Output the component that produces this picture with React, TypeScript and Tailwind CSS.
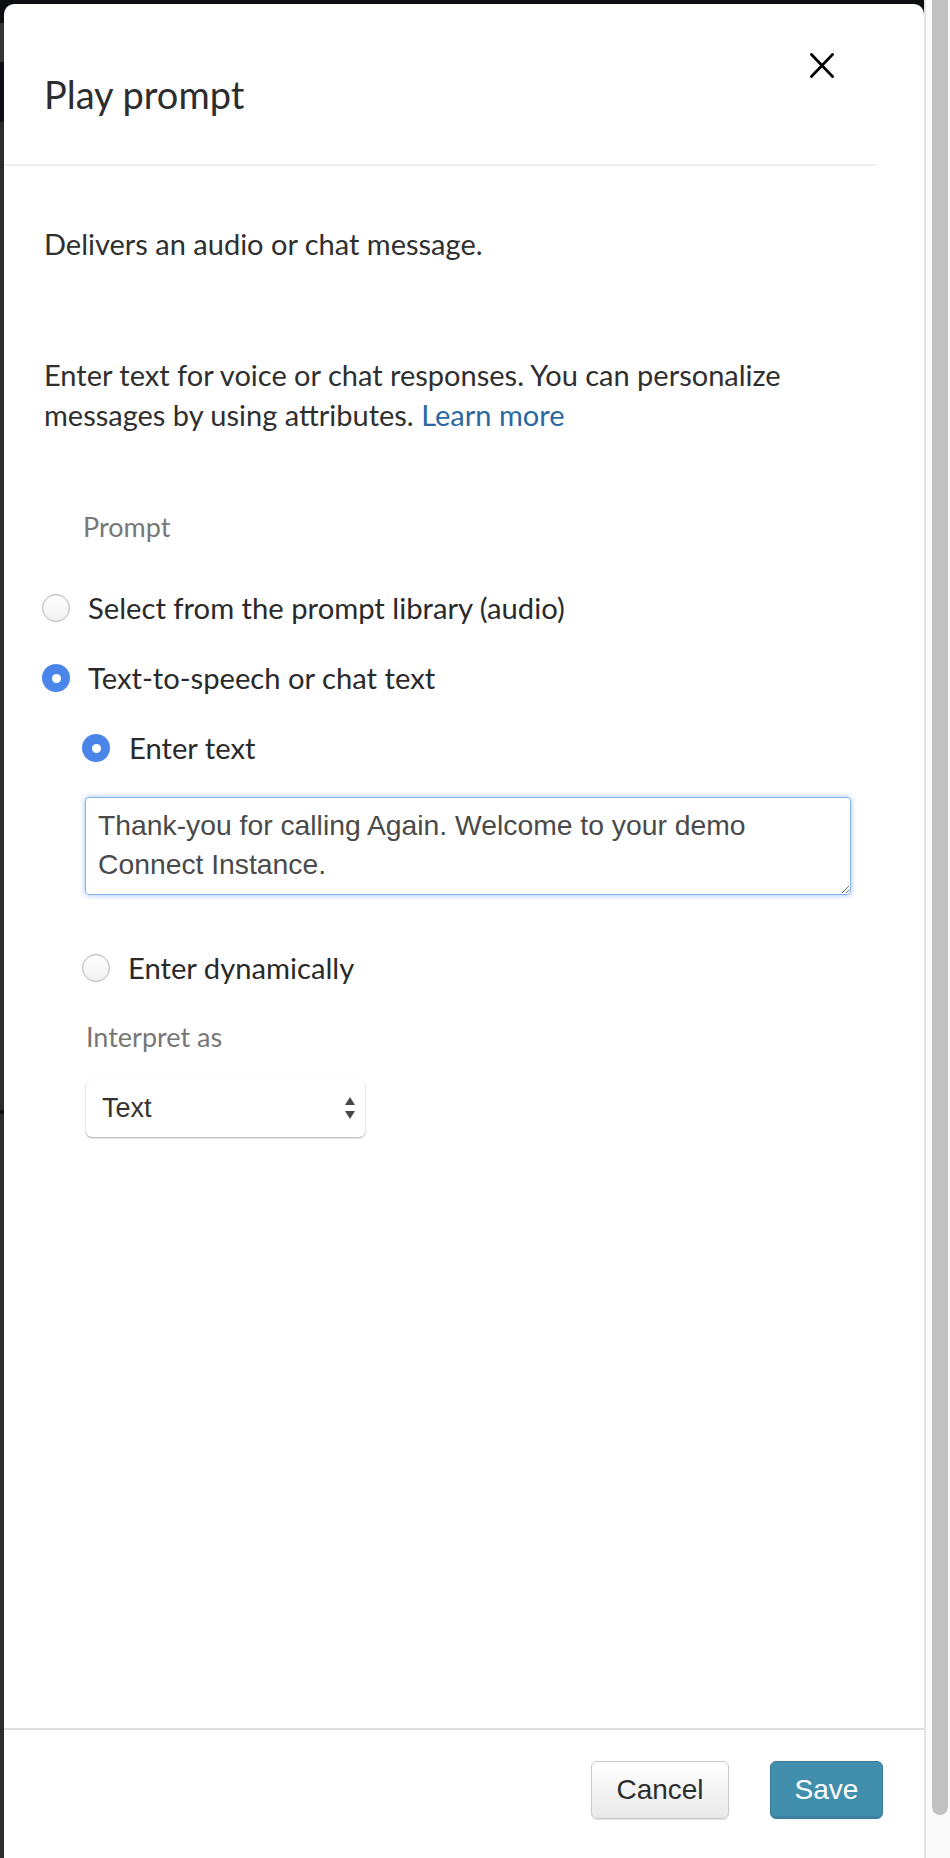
function CloseIcon() {
  return (
    <svg width="24" height="25" viewBox="0 0 24 25" fill="none">
      <path d="M1.5 1.5 L22.5 23.5 M22.5 1.5 L1.5 23.5" stroke="#000" strokeWidth="2.7" strokeLinecap="square" />
    </svg>
  );
}

function Radio({ checked }: { checked?: boolean }) {
  if (checked) {
    return (
      <span className="flex h-[28px] w-[28px] shrink-0 items-center justify-center rounded-full bg-[#4a86ea]">
        <span className="h-[9px] w-[9px] rounded-full bg-white" />
      </span>
    );
  }
  return (
    <span className="h-[28px] w-[28px] shrink-0 rounded-full border border-[#b4b4b4] bg-gradient-to-b from-white to-[#f1f1f1] shadow-[inset_0_1px_1px_rgba(0,0,0,0.06)]" />
  );
}

function Option({ label, checked, className = "" }: { label: string; checked?: boolean; className?: string }) {
  return (
    <label className={`flex h-[40px] items-center gap-[18px] ${className}`}>
      <Radio checked={checked} />
      <span className="text-[29.2px] leading-[40px] text-[#2a2a2a]">{label}</span>
    </label>
  );
}

export default function App() {
  const sans = "font-['Lato','Open_Sans',sans-serif]";
  const sys = "font-['Liberation_Sans','Arial',sans-serif]";

  return (
    <div className={`flex h-[1858px] w-[950px] overflow-hidden bg-[#0d0f12] ${sans}`}>
      {/* page behind the modal */}
      <div className="flex w-[4px] shrink-0 flex-col">
        <div className="h-[23px] bg-[#0d0f12]" />
        <div className="h-[39px] bg-[#343434]" />
        <div className="h-[60px] bg-[#0d0f12]" />
        <div className="h-[988px] bg-[#2c2c2c]" />
        <div className="h-[4px] bg-[#111]" />
        <div className="flex-1 bg-[#2c2c2c]" />
      </div>

      <div className="flex w-[920px] shrink-0 flex-col pt-[4px]">
        <div className="flex flex-1 flex-col rounded-t-[10px] bg-white">
          {/* Header */}
          <div className="flex h-[160px] items-start justify-between pl-[40px] pr-[90px]">
            <h1 className="mt-[70px] text-[38px] leading-[40px] text-[#2d2d2d]">Play prompt</h1>
            <button className="mt-[49px] flex h-[25px] w-[24px] items-center justify-center">
              <CloseIcon />
            </button>
          </div>
          <div className="mr-[48px] h-[2px] bg-[#eeeeee]" />

          {/* Body */}
          <div className="flex flex-1 flex-col pl-[40px]">
            <p className="mt-[58px] text-[29px] leading-[40px] text-[#2f2f2f]">Delivers an audio or chat message.</p>

            <p className="mt-[91px] w-[800px] text-[29px] leading-[40px] text-[#2f2f2f]">
              Enter text for voice or chat responses. You can personalize messages by using attributes.{" "}
              <a className="text-[#2a68a2]">Learn more</a>
            </p>

            <div className="ml-[39px] mt-[76px] text-[27px] leading-[32px] text-[#777]">Prompt</div>

            <Option className="-ml-[2px] mt-[45px]" label="Select from the prompt library (audio)" />
            <Option className="-ml-[2px] mt-[30px]" label="Text-to-speech or chat text" checked />
            <Option className="ml-[38px] mt-[30px] gap-[19px]" label="Enter text" checked />

            <textarea
              className={`ml-[41px] mt-[29px] h-[98px] w-[766px] resize rounded-[4px] border-[1.5px] border-[#85b4ec] pl-[12px] pr-[8px] pt-[8px] text-[28.3px] leading-[39px] text-[#4a4a4a] shadow-[0_0_5px_1px_rgba(90,150,235,0.45)] outline-none ${sys}`}
              defaultValue="Thank-you for calling Again. Welcome to your demo Connect Instance."
            />

            <Option className="ml-[38px] mt-[53px] gap-[18px]" label="Enter dynamically" />

            <div className="ml-[42px] mt-[33px] text-[27px] leading-[32px] text-[#777]">Interpret as</div>

            <div className="ml-[42px] mt-[27px] flex h-[57px] w-[279px] items-center justify-between rounded-[6px] bg-white pl-[16px] pr-[9px] shadow-[0_1px_2px_rgba(0,0,0,0.35)]">
              <span className={`text-[27px] text-[#333] ${sys}`}>Text</span>
              <svg width="12" height="26" viewBox="0 0 12 26" className="mb-[2px]">
                <path d="M6 2 L11 10 L1 10 Z" fill="#4a4a4a" />
                <path d="M1 16 L11 16 L6 24 Z" fill="#4a4a4a" />
              </svg>
            </div>
          </div>

          {/* Footer */}
          <div className="h-[2px] bg-[#dedede]" />
          <div className="flex h-[128px] items-start justify-end gap-[41px] pr-[41px] pt-[31px]">
            <button className={`h-[58px] w-[138px] rounded-[6px] border border-[#cbcbcb] bg-gradient-to-b from-white to-[#e8e8e8] text-[28px] text-[#2d2d2d] shadow-[0_1px_1px_rgba(0,0,0,0.12)] ${sys}`}>
              Cancel
            </button>
            <button className={`h-[58px] w-[113px] rounded-[6px] border border-[#3a7c97] bg-[#428fad] text-[28px] text-white shadow-[inset_0_-2px_0_rgba(0,0,0,0.08)] ${sys}`}>
              Save
            </button>
          </div>
        </div>
      </div>

      {/* scrollbar */}
      <div className="flex w-[26px] shrink-0 border-l-2 border-[#e4e4e4] bg-[#f9f9f9] pl-[6px]">
        <div className="h-[1815px] w-[16px] rounded-b-[8px] bg-[#c1c1c1]" />
      </div>
    </div>
  );
}
